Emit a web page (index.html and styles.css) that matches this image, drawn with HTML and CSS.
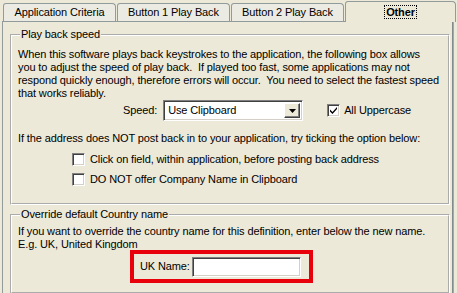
FILE: index.html
```html
<!DOCTYPE html>
<html>
<head>
<meta charset="utf-8">
<link rel="stylesheet" href="styles.css">
</head>
<body>
<div class="window">
  <div class="tabs">
    <div class="tab">Application Criteria</div>
    <div class="tab">Button 1 Play Back</div>
    <div class="tab">Button 2 Play Back</div>
    <div class="tab active"><span class="focus">Other</span></div>
  </div>
  <div class="panel">
    <fieldset class="group speed-group">
      <legend>Play back speed</legend>
      <p class="desc">When this software plays back keystrokes to the application, the following box allows<br>you to adjust the speed of play back.&nbsp; If played too fast, some applications may not<br>respond quickly enough, therefore errors will occur.&nbsp; You need to select the fastest speed<br>that works reliably.</p>
      <div class="speed-row">
        <span class="speed-label">Speed:</span>
        <div class="select">
          <span class="select-text">Use Clipboard</span>
          <span class="select-btn"><svg width="7" height="4" viewBox="0 0 7 4"><path d="M0 0h7L3.5 4z" fill="#000"/></svg></span>
        </div>
        <label class="check upper">
          <span class="box checked"><svg width="9" height="9" viewBox="0 0 9 9"><path d="M1 3.5l2.5 2.5 4.5-5v2l-4.5 5L1 5.5z" fill="#000"/></svg></span>
          <span>All Uppercase</span>
        </label>
      </div>
      <p class="desc hint">If the address does NOT post back in to your application, try ticking the option below:</p>
      <div class="options">
        <label class="check"><span class="box"></span><span>Click on field, within application, before posting back address</span></label>
        <label class="check"><span class="box"></span><span>DO NOT offer Company Name in Clipboard</span></label>
      </div>
    </fieldset>
    <fieldset class="group country-group">
      <legend>Override default Country name</legend>
      <p class="desc">If you want to override the country name for this definition, enter below the new name.<br>E.g. UK, United Kingdom</p>
      <div class="highlight">
        <span class="uk-label">UK Name:</span>
        <span class="textbox"></span>
      </div>
    </fieldset>
  </div>
</div>
</body>
</html>
```

FILE: styles.css
```css
* { box-sizing: border-box; }
html, body {
  margin: 0;
  padding: 0;
  background: #ece9d8;
  overflow: hidden;
}
body {
  font-family: "Liberation Sans", Arial, sans-serif;
  font-size: 11px;
  line-height: 13px;
  letter-spacing: -0.12px;
  color: #000;
  width: 457px;
  height: 293px;
}
.window {
  padding-left: 2px;
}
.tabs {
  display: flex;
  align-items: flex-end;
  height: 21px;
  padding-left: 1px;
}
.tab {
  width: 113px;
  height: 18px;
  border: 1px solid #919b9c;
  border-bottom: none;
  border-radius: 3px 4px 0 0;
  background: #ecebe3;
  text-align: center;
  line-height: 16px;
  margin-right: 1px;
  white-space: nowrap;
}
.tab.active {
  position: relative;
  z-index: 1;
  width: 111px;
  height: 21px;
  margin-left: 0;
  margin-bottom: -1px;
  background: #ece9d8;
  font-weight: bold;
  line-height: 20px;
}
.focus {
  outline: 1px dotted #000;
  outline-offset: 0;
  padding: 0 1px;
}
.panel {
  width: 451px;
  height: 290px;
  border: 1px solid #919b9c;
  border-right-color: #7f8b8c;
  box-shadow: 1px 0 0 #aca899;
  padding: 6px 2px 0 7px;
}
.group {
  margin: 0;
  border: 2px groove #fff;
  padding: 0 6px;
  min-width: 0;
}
.group legend {
  padding: 0 1px;
  margin-left: 2px;
  line-height: 13px;
}
.desc {
  margin: 0;
  white-space: nowrap;
  padding-top: 7px;
}
.speed-row {
  display: flex;
  align-items: center;
  height: 21px;
  margin-top: 0;
  padding-left: 105px;
}
.speed-label {
  margin-right: 6px;
}
.select {
  width: 140px;
  height: 21px;
  display: flex;
  align-items: center;
  background: #fff;
  border: 1px solid #7f9db9;
  border-color: #808080 #fff #fff #808080;
  box-shadow: inset 1px 1px 0 #404040, inset -1px -1px 0 #d4d0c8;
  padding: 2px;
}
.select-text {
  flex: 1;
  padding-left: 2px;
}
.select-btn {
  width: 16px;
  height: 15px;
  background: #ece9d8;
  border: 1px solid;
  border-color: #fff #404040 #404040 #fff;
  box-shadow: inset -1px -1px 0 #808080;
  display: flex;
  align-items: center;
  justify-content: center;
}
.check {
  display: flex;
  align-items: center;
  gap: 5px;
  height: 20px;
}
.upper {
  margin-left: 24px;
  gap: 4px;
}
.box {
  width: 13px;
  height: 13px;
  background: #fff;
  border: 1px solid;
  border-color: #808080 #fff #fff #808080;
  box-shadow: inset 1px 1px 0 #404040, inset -1px -1px 0 #d4d0c8;
  display: flex;
  align-items: center;
  justify-content: center;
}
.hint {
  padding-top: 11px;
}
.options {
  padding-left: 54px;
  padding-top: 4px;
  padding-bottom: 14px;
}
.country-group {
  margin-top: 3px;
  height: 86px;
}
.country-group .desc {
  padding-top: 4px;
}
.highlight {
  display: flex;
  align-items: center;
  width: 183px;
  height: 33px;
  margin: -1px 0 0 112px;
  border: 4px solid #e8000b;
  padding: 0 7px 0 6px;
  gap: 2px;
}
.textbox {
  width: 109px;
  height: 20px;
  background: #fff;
  border: 1px solid;
  border-color: #808080 #fff #fff #808080;
  box-shadow: inset 1px 1px 0 #404040, inset -1px -1px 0 #d4d0c8;
}
```
